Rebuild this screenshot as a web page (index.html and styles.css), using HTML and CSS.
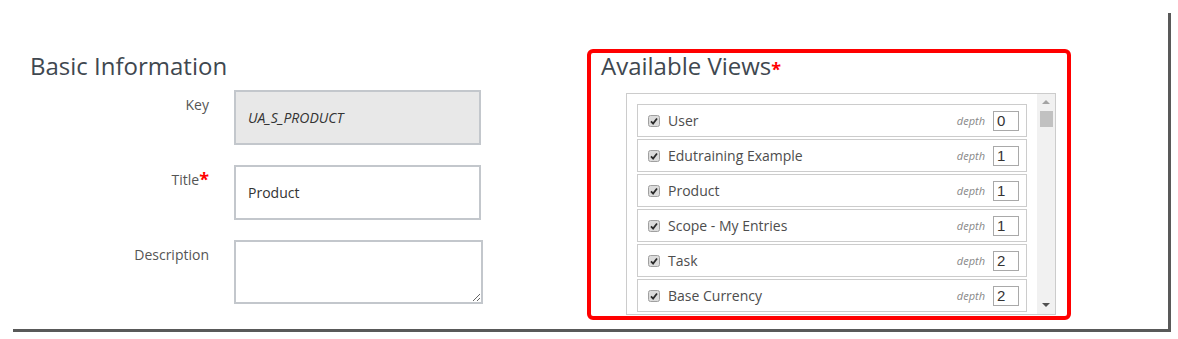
FILE: index.html
```html
<!DOCTYPE html>
<html lang="en">
<head>
    <meta charset="UTF-8">
    <meta name="viewport" content="width=device-width, initial-scale=1.0">
    <title>Product</title>
    <link rel="stylesheet" href="styles.css">
</head>
<body>
    <div class="panel">
        <!-- 基本信息 -->
        <section class="basic">
            <h2 class="section-title">Basic Information</h2>
            <div class="field">
                <label class="field-label">Key</label>
                <input class="field-input readonly" value="UA_S_PRODUCT" readonly>
            </div>
            <div class="field">
                <label class="field-label">Title<span class="req">*</span></label>
                <input class="field-input" value="Product">
            </div>
            <div class="field">
                <label class="field-label">Description</label>
                <textarea class="field-text"></textarea>
            </div>
        </section>

        <!-- 可用视图 -->
        <section class="views">
            <h2 class="section-title">Available Views<span class="req">*</span></h2>
            <div class="view-box">
                <ul class="view-list">
                    <li class="view-item">
                        <svg class="cb" viewBox="0 0 12 12"><rect x="0.5" y="0.5" width="11" height="11" rx="2"/><path d="M3 6.3l2.1 2.2 3.9-5"/></svg>
                        <span class="view-name">User</span>
                        <span class="depth-label">depth</span>
                        <input class="depth-input" value="0">
                    </li>
                    <li class="view-item">
                        <svg class="cb" viewBox="0 0 12 12"><rect x="0.5" y="0.5" width="11" height="11" rx="2"/><path d="M3 6.3l2.1 2.2 3.9-5"/></svg>
                        <span class="view-name">Edutraining Example</span>
                        <span class="depth-label">depth</span>
                        <input class="depth-input" value="1">
                    </li>
                    <li class="view-item">
                        <svg class="cb" viewBox="0 0 12 12"><rect x="0.5" y="0.5" width="11" height="11" rx="2"/><path d="M3 6.3l2.1 2.2 3.9-5"/></svg>
                        <span class="view-name">Product</span>
                        <span class="depth-label">depth</span>
                        <input class="depth-input" value="1">
                    </li>
                    <li class="view-item">
                        <svg class="cb" viewBox="0 0 12 12"><rect x="0.5" y="0.5" width="11" height="11" rx="2"/><path d="M3 6.3l2.1 2.2 3.9-5"/></svg>
                        <span class="view-name">Scope - My Entries</span>
                        <span class="depth-label">depth</span>
                        <input class="depth-input" value="1">
                    </li>
                    <li class="view-item">
                        <svg class="cb" viewBox="0 0 12 12"><rect x="0.5" y="0.5" width="11" height="11" rx="2"/><path d="M3 6.3l2.1 2.2 3.9-5"/></svg>
                        <span class="view-name">Task</span>
                        <span class="depth-label">depth</span>
                        <input class="depth-input" value="2">
                    </li>
                    <li class="view-item">
                        <svg class="cb" viewBox="0 0 12 12"><rect x="0.5" y="0.5" width="11" height="11" rx="2"/><path d="M3 6.3l2.1 2.2 3.9-5"/></svg>
                        <span class="view-name">Base Currency</span>
                        <span class="depth-label">depth</span>
                        <input class="depth-input" value="2">
                    </li>
                </ul>
                <div class="scrollbar">
                    <span class="arrow up"></span>
                    <span class="thumb"></span>
                    <span class="arrow down"></span>
                </div>
            </div>
        </section>
    </div>
</body>
</html>
```

FILE: styles.css
```css
body{
    margin: 0;
    background: #fff;
    font-family: "Open Sans", "Liberation Sans", sans-serif;
}
.panel{
    display: grid;
    grid-template-columns: 574px 484px;
    align-items: start;
    margin: 13px 0 0 13px;
    width: 1155px;
    height: 316px;
    border-right: 3px solid #595959;
    border-bottom: 3px solid #595959;
}
.section-title{
    margin: 0;
    height: 24px;
    font-size: 24px;
    font-weight: 400;
    line-height: 24px;
    color: #3f4850;
}
.req{
    color: #f00;
    font-size: 18px;
    font-weight: 700;
    line-height: 0;
    vertical-align: -1px;
}

/* 左侧表单 */
.basic{
    padding: 41px 0 0 17px;
}
.basic .section-title{
    margin-bottom: 12px;
}
.field{
    display: flex;
    align-items: flex-start;
    gap: 25px;
    margin-bottom: 20px;
}
.field-label{
    width: 179px;
    padding-top: 5px;
    text-align: right;
    font-size: 14px;
    line-height: 20px;
    color: #555;
}
.field-input{
    box-sizing: border-box;
    width: 247px;
    height: 55px;
    margin: 0;
    padding: 0 12px;
    border: 2px solid #c3c7cc;
    outline: none;
    font-family: "Open Sans", sans-serif;
    font-size: 14px;
    color: #333;
}
.field-input.readonly{
    background: #e8e8e8;
    font-style: italic;
    font-size: 14px;
}
.field-text{
    box-sizing: border-box;
    width: 249px;
    height: 64px;
    margin: 0;
    border: 2px solid #c3c7cc;
    outline: none;
}

/* 右侧视图 */
.views{
    box-sizing: border-box;
    margin-top: 36px;
    height: 271px;
    padding: 1px 10px;
    border: 4px solid #f00;
    border-radius: 6px;
}
.views .section-title{
    margin-bottom: 15px;
}
.view-box{
    display: flex;
    box-sizing: border-box;
    width: 430px;
    height: 222px;
    margin-left: 25px;
    border: 1px solid #ccc;
}
.view-list{
    flex: 1;
    margin: 0;
    padding: 10px 0 0 10px;
    list-style: none;
    overflow: hidden;
}
.view-item{
    display: flex;
    align-items: center;
    box-sizing: border-box;
    width: 390px;
    height: 33px;
    margin-bottom: 2px;
    padding: 0 7px 0 10px;
    border: 1px solid #ccc;
}
.cb{
    width: 12px;
    height: 12px;
    margin-right: 8px;
}
.cb rect{
    fill: #dcdcdc;
    stroke: #a0a0a0;
}
.cb path{
    fill: none;
    stroke: #2b2b2b;
    stroke-width: 1.8;
}
.view-name{
    flex: 1;
    font-size: 14px;
    color: #4d4d4d;
}
.depth-label{
    margin-right: 8px;
    font-size: 11px;
    font-style: italic;
    color: #888;
}
.depth-input{
    box-sizing: border-box;
    width: 26px;
    height: 20px;
    margin: 0;
    padding: 0 0 0 3px;
    border: 1px solid #a9a9a9;
    outline: none;
    font-family: "Liberation Sans", sans-serif;
    font-size: 15px;
    color: #333;
}
.scrollbar{
    display: flex;
    flex-direction: column;
    align-items: center;
    width: 18px;
    background: #f1f1f1;
}
.arrow{
    width: 0;
    height: 0;
    border-left: 4px solid transparent;
    border-right: 4px solid transparent;
}
.arrow.up{
    margin-top: 6px;
    border-bottom: 4px solid #a3a3a3;
}
.arrow.down{
    margin-top: auto;
    margin-bottom: 7px;
    border-top: 4px solid #505050;
}
.thumb{
    width: 13px;
    height: 16px;
    margin-top: 7px;
    background: #c1c1c1;
}
```
